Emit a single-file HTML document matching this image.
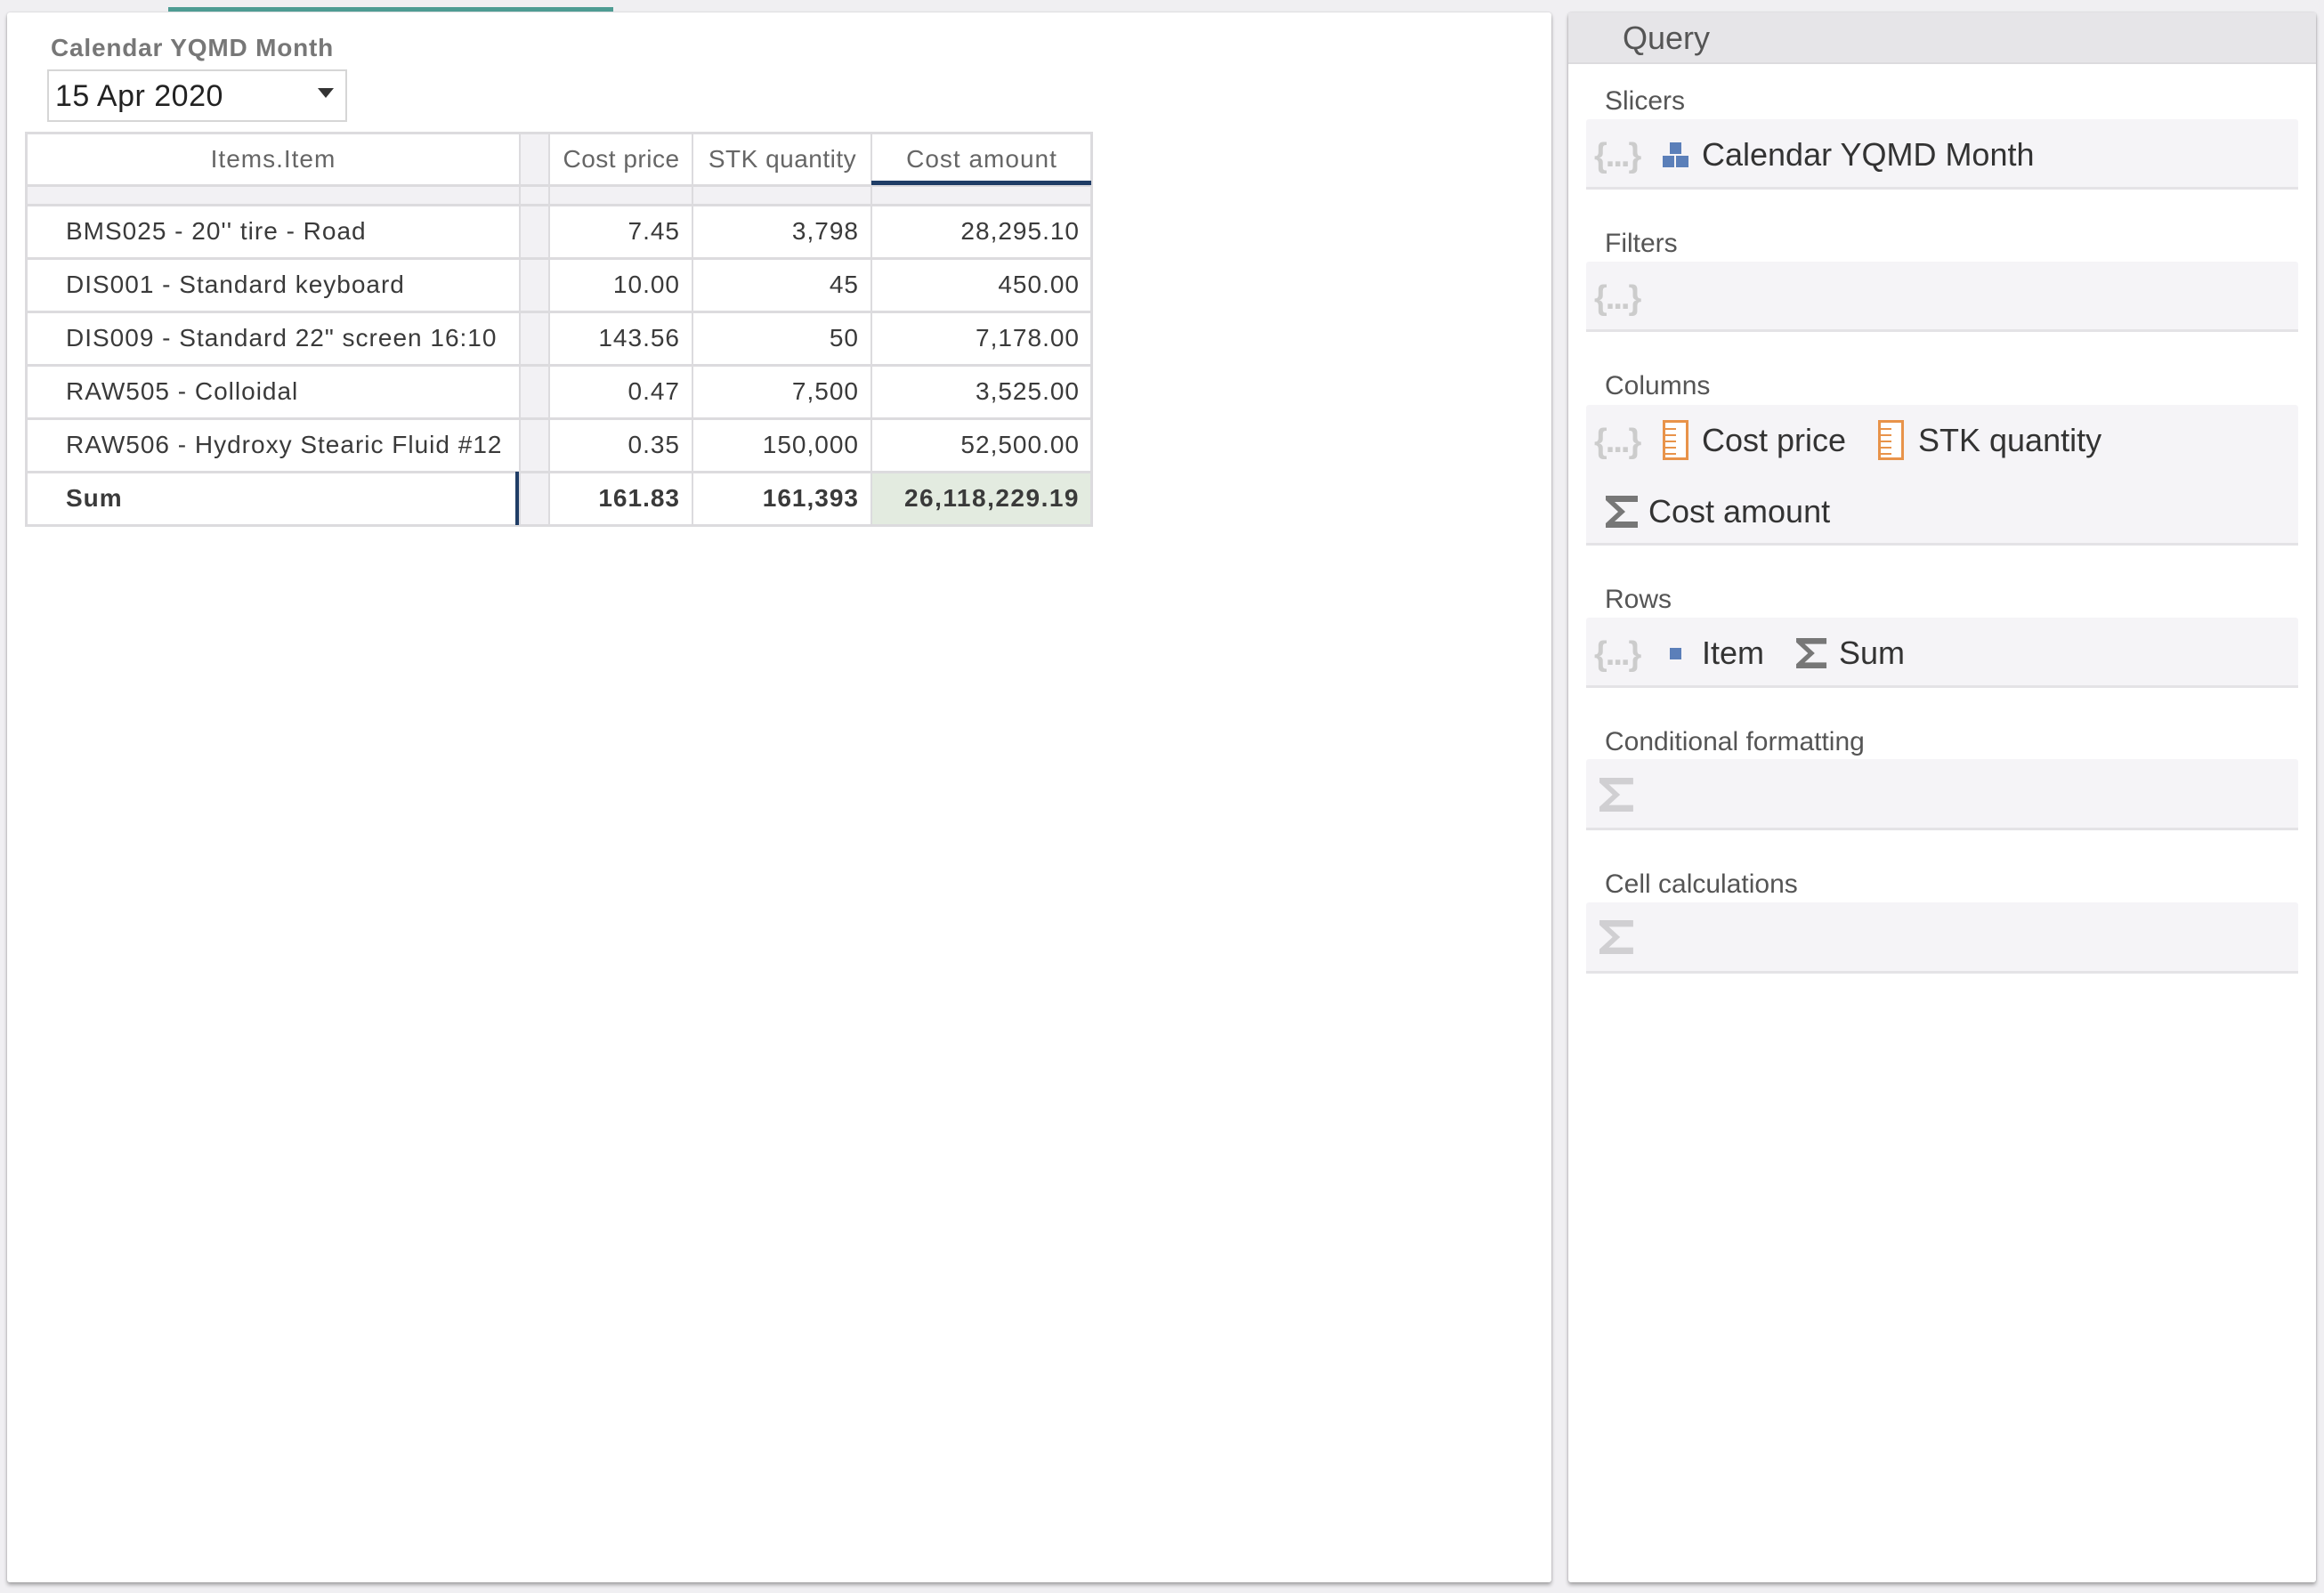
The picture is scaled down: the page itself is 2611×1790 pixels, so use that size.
<!DOCTYPE html>
<html><head><meta charset="utf-8"><style>
*{margin:0;padding:0;box-sizing:border-box}
body{width:2611px;height:1790px;background:#f0eff2;position:relative;overflow:hidden;font-family:"Liberation Sans",sans-serif;color:#333}
.abs{position:absolute}
.panel{background:#fff;box-shadow:0 3px 4px rgba(0,0,0,.3),0 0 2px rgba(0,0,0,.15);border-radius:3px}
.cell{position:absolute;font-size:28px;line-height:60px;white-space:nowrap;letter-spacing:1px;color:#3a3a3a}
.r{text-align:right}
.hl{position:absolute;height:3px;background:#dcdbde}
.vl{position:absolute;width:3px;background:#dcdbde}
.lbl{position:absolute;left:1803px;font-size:30px;color:#555}
.box{position:absolute;left:1782px;width:800px;background:#f5f4f7;border-bottom:3px solid #e4e3e6;border-radius:3px 3px 0 0}
.it{position:absolute;font-size:36px;color:#333;white-space:nowrap;line-height:40px}
.br{position:absolute;font-size:38px;color:#ccc;font-weight:bold;line-height:40px;letter-spacing:-2px}
</style></head><body>
<div class="panel abs" style="left:8px;top:14px;width:1735px;height:1764px"></div>
<div class="abs" style="left:189px;top:8px;width:500px;height:5px;background:#4e9c93"></div>
<div class="abs" style="left:57px;top:38px;font-size:28px;font-weight:bold;color:#777;letter-spacing:0.8px">Calendar YQMD Month</div>
<div class="abs" style="left:53px;top:78px;width:337px;height:59px;border:2px solid #d6d6d6;background:#fff"></div>
<div class="abs" style="left:62px;top:89px;font-size:34px;color:#222;letter-spacing:0.5px">15 Apr 2020</div>
<div class="abs" style="left:357px;top:99px;width:0;height:0;border-left:9px solid transparent;border-right:9px solid transparent;border-top:11px solid #333"></div>

<!-- table -->
<div class="abs" style="left:30px;top:149px;width:1196px;height:441px;background:#fff"></div>
<div class="abs" style="left:30px;top:208px;width:1196px;height:22px;background:#f2f1f4"></div>
<div class="abs" style="left:584px;top:149px;width:32px;height:441px;background:#f2f1f4"></div>
<div class="abs" style="left:979px;top:530px;width:247px;height:60px;background:#e3ebe0"></div>
<div class="hl" style="left:28px;top:148px;width:1200px"></div>
<div class="hl" style="left:28px;top:207px;width:1200px"></div>
<div class="hl" style="left:28px;top:229px;width:1200px"></div>
<div class="hl" style="left:28px;top:289px;width:1200px"></div>
<div class="hl" style="left:28px;top:349px;width:1200px"></div>
<div class="hl" style="left:28px;top:409px;width:1200px"></div>
<div class="hl" style="left:28px;top:469px;width:1200px"></div>
<div class="hl" style="left:28px;top:529px;width:1200px"></div>
<div class="hl" style="left:28px;top:589px;width:1200px"></div>
<div class="vl" style="left:28px;top:148px;height:444px"></div>
<div class="vl" style="left:583px;top:148px;height:444px;width:2px"></div>
<div class="vl" style="left:616px;top:148px;height:444px;width:2px"></div>
<div class="vl" style="left:777px;top:148px;height:444px;width:2px"></div>
<div class="vl" style="left:978px;top:148px;height:444px;width:2px"></div>
<div class="vl" style="left:1225px;top:148px;height:444px"></div>
<div class="abs" style="left:979px;top:203px;width:247px;height:5px;background:#1f3d66"></div>
<div class="abs" style="left:579px;top:530px;width:4px;height:60px;background:#1f3d66"></div>

<div class="cell" style="left:30px;width:554px;top:149px;text-align:center;color:#666">Items.Item</div>
<div class="cell" style="left:618px;width:160px;top:149px;text-align:center;color:#666;letter-spacing:0.5px">Cost price</div>
<div class="cell" style="left:780px;width:198px;top:149px;text-align:center;color:#666;letter-spacing:0.5px">STK quantity</div>
<div class="cell" style="left:980px;width:246px;top:149px;text-align:center;color:#666">Cost amount</div>

<div class="cell" style="left:74px;top:230px">BMS025 - 20'' tire - Road</div>
<div class="cell" style="left:74px;top:290px">DIS001 - Standard keyboard</div>
<div class="cell" style="left:74px;top:350px">DIS009 - Standard 22" screen 16:10</div>
<div class="cell" style="left:74px;top:410px">RAW505 - Colloidal</div>
<div class="cell" style="left:74px;top:470px">RAW506 - Hydroxy Stearic Fluid #12</div>
<div class="cell" style="left:74px;top:530px;font-weight:bold">Sum</div>

<div class="cell r" style="right:1847px;top:230px">7.45</div>
<div class="cell r" style="right:1847px;top:290px">10.00</div>
<div class="cell r" style="right:1847px;top:350px">143.56</div>
<div class="cell r" style="right:1847px;top:410px">0.47</div>
<div class="cell r" style="right:1847px;top:470px">0.35</div>
<div class="cell r" style="right:1847px;top:530px;font-weight:bold">161.83</div>

<div class="cell r" style="right:1646px;top:230px">3,798</div>
<div class="cell r" style="right:1646px;top:290px">45</div>
<div class="cell r" style="right:1646px;top:350px">50</div>
<div class="cell r" style="right:1646px;top:410px">7,500</div>
<div class="cell r" style="right:1646px;top:470px">150,000</div>
<div class="cell r" style="right:1646px;top:530px;font-weight:bold">161,393</div>

<div class="cell r" style="right:1398px;top:230px">28,295.10</div>
<div class="cell r" style="right:1398px;top:290px">450.00</div>
<div class="cell r" style="right:1398px;top:350px">7,178.00</div>
<div class="cell r" style="right:1398px;top:410px">3,525.00</div>
<div class="cell r" style="right:1398px;top:470px">52,500.00</div>
<div class="cell r" style="right:1398px;top:530px;font-weight:bold;letter-spacing:1.5px">26,118,229.19</div>

<!-- right panel -->
<div class="panel abs" style="left:1762px;top:14px;width:840px;height:1764px"></div>
<div class="abs" style="left:1762px;top:14px;width:840px;height:58px;background:#e6e5e8;border-bottom:2px solid #dcdbde"></div>
<div class="abs" style="left:1823px;top:22px;font-size:36px;color:#555">Query</div>

<div class="lbl" style="top:97px">Slicers</div>
<div class="box" style="top:134px;height:79px"></div>
<div class="lbl" style="top:257px">Filters</div>
<div class="box" style="top:294px;height:79px"></div>
<div class="lbl" style="top:417px">Columns</div>
<div class="box" style="top:455px;height:158px"></div>
<div class="lbl" style="top:657px">Rows</div>
<div class="box" style="top:694px;height:79px"></div>
<div class="lbl" style="top:817px">Conditional formatting</div>
<div class="box" style="top:853px;height:80px"></div>
<div class="lbl" style="top:977px">Cell calculations</div>
<div class="box" style="top:1014px;height:80px"></div>

<!-- brace icons -->
<div class="br" style="left:1791px;top:155px">{...}</div>
<div class="br" style="left:1791px;top:315px">{...}</div>
<div class="br" style="left:1791px;top:476px">{...}</div>
<div class="br" style="left:1791px;top:715px">{...}</div>

<!-- hierarchy icon -->
<div class="abs" style="left:1876px;top:160px;width:13px;height:13px;background:#5b7fb9"></div>
<div class="abs" style="left:1868px;top:175px;width:13px;height:13px;background:#5b7fb9"></div>
<div class="abs" style="left:1883px;top:175px;width:14px;height:13px;background:#5b7fb9"></div>
<div class="it" style="left:1912px;top:154px">Calendar YQMD Month</div>

<!-- ruler icons -->
<svg class="abs" style="left:1868px;top:472px" width="30" height="46" viewBox="0 0 30 46"><rect x="1.5" y="1.5" width="26" height="42" fill="#fff" stroke="#e8934a" stroke-width="3"/><path d="M3 10h12M3 17h12M3 24h12M3 31h12M3 38h12" stroke="#e8934a" stroke-width="2"/></svg>
<div class="it" style="left:1912px;top:475px">Cost price</div>
<svg class="abs" style="left:2110px;top:472px" width="30" height="46" viewBox="0 0 30 46"><rect x="1.5" y="1.5" width="26" height="42" fill="#fff" stroke="#e8934a" stroke-width="3"/><path d="M3 10h12M3 17h12M3 24h12M3 31h12M3 38h12" stroke="#e8934a" stroke-width="2"/></svg>
<div class="it" style="left:2155px;top:475px">STK quantity</div>

<svg class="abs" style="left:1804px;top:557px" width="38" height="36" viewBox="0 0 38 36"><path d="M0 0H36V7H10L22 18L10 29H36V36H0V31L14 18L0 5Z" fill="#777"/></svg>
<div class="it" style="left:1852px;top:555px">Cost amount</div>

<div class="abs" style="left:1876px;top:728px;width:13px;height:13px;background:#5b7fb9"></div>
<div class="it" style="left:1912px;top:714px">Item</div>
<svg class="abs" style="left:2018px;top:717px" width="36" height="34" viewBox="0 0 38 36"><path d="M0 0H36V7H10L22 18L10 29H36V36H0V31L14 18L0 5Z" fill="#777"/></svg>
<div class="it" style="left:2066px;top:714px">Sum</div>

<svg class="abs" style="left:1797px;top:874px" width="40" height="38" viewBox="0 0 38 36"><path d="M0 0H36V7H10L22 18L10 29H36V36H0V31L14 18L0 5Z" fill="#d0cfd2"/></svg>
<svg class="abs" style="left:1797px;top:1034px" width="40" height="38" viewBox="0 0 38 36"><path d="M0 0H36V7H10L22 18L10 29H36V36H0V31L14 18L0 5Z" fill="#d0cfd2"/></svg>
</body></html>
